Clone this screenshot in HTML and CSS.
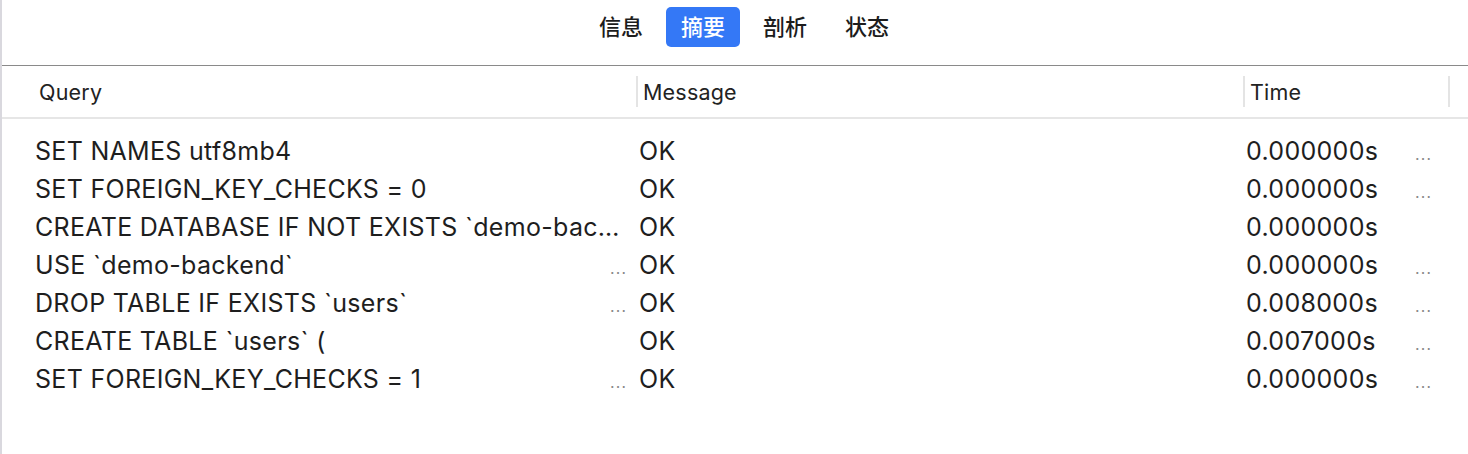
FILE: index.html
```html
<!DOCTYPE html>
<html lang="zh">
<head>
<meta charset="utf-8">
<title>摘要</title>
<link rel="stylesheet" href="styles.css">
</head>
<body>
<div class="window">
  <div class="tabs">
    <div class="tab">信息</div>
    <div class="tab active">摘要</div>
    <div class="tab">剖析</div>
    <div class="tab">状态</div>
  </div>
  <div class="table">
    <div class="thead">
      <div class="th th-query">Query</div>
      <div class="th th-sep">Message</div>
      <div class="th th-sep">Time</div>
      <div class="th th-sep th-end"></div>
    </div>
    <div class="tbody">
      <div class="row">
        <div class="cell c-query"><span class="txt">SET NAMES utf8mb4</span></div>
        <div class="cell c-msg">OK</div>
        <div class="cell c-time"><span class="txt">0.000000s</span><span class="more">…</span></div>
      </div>
      <div class="row">
        <div class="cell c-query"><span class="txt">SET FOREIGN_KEY_CHECKS = 0</span></div>
        <div class="cell c-msg">OK</div>
        <div class="cell c-time"><span class="txt">0.000000s</span><span class="more">…</span></div>
      </div>
      <div class="row">
        <div class="cell c-query"><span class="txt">CREATE DATABASE IF NOT EXISTS `demo-bac…</span></div>
        <div class="cell c-msg">OK</div>
        <div class="cell c-time"><span class="txt">0.000000s</span></div>
      </div>
      <div class="row">
        <div class="cell c-query"><span class="txt">USE `demo-backend`</span><span class="more">…</span></div>
        <div class="cell c-msg">OK</div>
        <div class="cell c-time"><span class="txt">0.000000s</span><span class="more">…</span></div>
      </div>
      <div class="row">
        <div class="cell c-query"><span class="txt">DROP TABLE IF EXISTS `users`</span><span class="more">…</span></div>
        <div class="cell c-msg">OK</div>
        <div class="cell c-time"><span class="txt">0.008000s</span><span class="more">…</span></div>
      </div>
      <div class="row">
        <div class="cell c-query"><span class="txt">CREATE TABLE `users` (</span></div>
        <div class="cell c-msg">OK</div>
        <div class="cell c-time"><span class="txt">0.007000s</span><span class="more">…</span></div>
      </div>
      <div class="row">
        <div class="cell c-query"><span class="txt">SET FOREIGN_KEY_CHECKS = 1</span><span class="more">…</span></div>
        <div class="cell c-msg">OK</div>
        <div class="cell c-time"><span class="txt">0.000000s</span><span class="more">…</span></div>
      </div>
    </div>
  </div>
</div>
</body>
</html>
```
FILE: styles.css
```css
html, body {
  margin: 0;
  padding: 0;
  background: #ffffff;
}

body {
  font-family: "Inter", "Liberation Sans", "Noto Sans CJK SC", sans-serif;
  color: #222222;
}

.window {
  height: 454px;
  border-left: 2px solid #d9d8de;
  box-sizing: border-box;
  overflow: hidden;
}

.tabs {
  height: 65px;
  box-sizing: border-box;
  padding-top: 7px;
  padding-left: 18px;
  display: flex;
  justify-content: center;
  gap: 8px;
}

.tab {
  width: 74px;
  height: 40px;
  box-sizing: border-box;
  padding-bottom: 4px;
  border-radius: 5px;
  display: flex;
  align-items: center;
  justify-content: center;
  font-family: "Noto Sans CJK SC", sans-serif;
  font-size: 22px;
  font-weight: 500;
  color: #1c1c1c;
}

.tab.active {
  background: #3478f6;
  color: #ffffff;
}

.thead {
  display: grid;
  grid-template-columns: 634px 607px 205px 1fr;
  height: 54px;
  box-sizing: border-box;
  border-top: 1px solid #8a8a8a;
  border-bottom: 2px solid #e6e6e6;
}

.th {
  position: relative;
  display: flex;
  align-items: center;
  font-size: 21.5px;
  letter-spacing: 0.2px;
  color: #222222;
  padding-left: 7px;
}

.th-query {
  padding-left: 37px;
}

.th-sep::before {
  content: "";
  position: absolute;
  left: 0;
  top: 10px;
  width: 2px;
  height: 31px;
  background: #e4e4e4;
}

.tbody {
  padding-top: 13px;
}

.row {
  display: grid;
  grid-template-columns: 634px 607px 205px;
  height: 38px;
  font-size: 25px;
  letter-spacing: 0.3px;
  color: #1e1e1e;
}

.cell {
  display: flex;
  align-items: center;
  min-width: 0;
  white-space: nowrap;
}

.c-query {
  padding-left: 33px;
  padding-right: 9px;
}

.c-msg {
  padding-left: 3px;
}

.c-time {
  padding-left: 3px;
  padding-right: 16px;
}

.txt {
  overflow: hidden;
  min-width: 0;
}

.more {
  margin-left: auto;
  flex: none;
  padding-left: 8px;
  font-family: "Liberation Sans", sans-serif;
  font-size: 18px;
  letter-spacing: 0;
  color: #8a8a8a;
  position: relative;
  top: 3px;
}
```
